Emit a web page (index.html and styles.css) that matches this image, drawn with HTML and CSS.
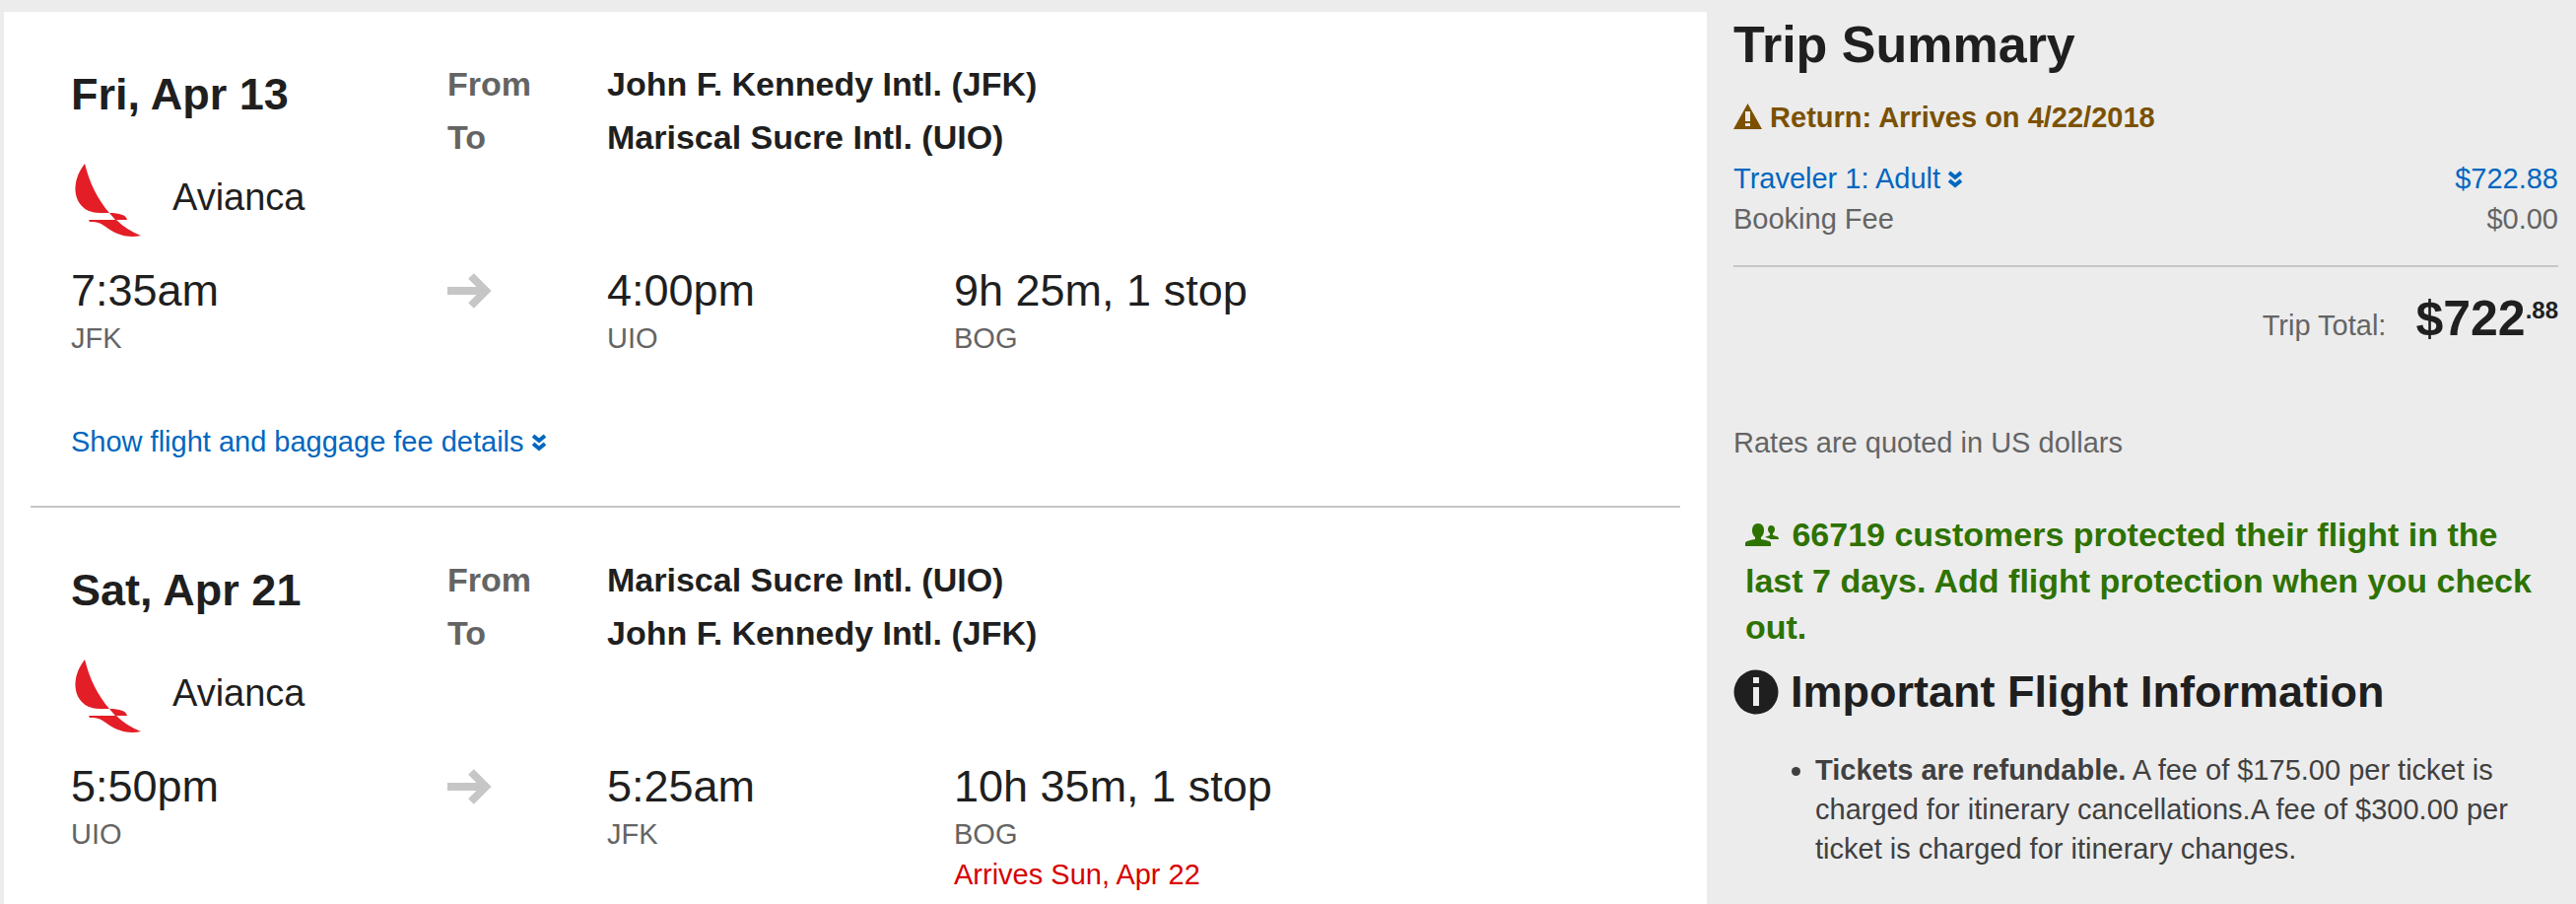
FILE: index.html
```html
<!DOCTYPE html>
<html lang="en">
<head>
    <meta charset="UTF-8">
    <meta name="viewport" content="width=device-width, initial-scale=1.0">
    <title>Trip Summary</title>
    <link rel="stylesheet" href="styles.css">
</head>
<body>
    <!-- Shared icons -->
    <svg class="sprite" aria-hidden="true">
        <symbol id="bird" viewBox="0 0 72 76">
            <path fill="#e31e26" d="M14 0 C3 14 1 32 11 43 Q17 50 29 50 Q34 50 39 50 C27 36 19 20 14 0 Z"/>
            <path fill="#e31e26" d="M39 50 C49 50 56 52 57 57 L45 57 Z"/>
            <path fill="#e31e26" d="M18 57 L46 57 Q56 67 71 73 C60 75 50 74 38 66 C30 60 28 59 19 59 Z"/>
        </symbol>
        <symbol id="arrow" viewBox="0 0 46 38">
            <path fill="none" stroke="#c6c6c6" stroke-width="8" d="M0 19 H40 M24 4 L39 19 L24 34"/>
        </symbol>
        <symbol id="chevrons" viewBox="0 0 14 18">
            <path fill="none" stroke="currentColor" stroke-width="4" d="M1 2 L7 7 L13 2 M1 10 L7 15 L13 10"/>
        </symbol>
    </svg>

    <main class="flights">
        <section class="flight">
            <div class="flight-head">
                <div>
                    <h2 class="date">Fri, Apr 13</h2>
                    <div class="airline">
                        <svg class="airline-logo" aria-hidden="true"><use href="#bird"/></svg>
                        <span>Avianca</span>
                    </div>
                </div>
                <dl class="route">
                    <dt>From</dt>
                    <dd>John F. Kennedy Intl. (JFK)</dd>
                    <dt>To</dt>
                    <dd>Mariscal Sucre Intl. (UIO)</dd>
                </dl>
            </div>
            <div class="times">
                <div>
                    <p class="time">7:35am</p>
                    <p class="place">JFK</p>
                </div>
                <svg class="arrow" aria-hidden="true"><use href="#arrow"/></svg>
                <div>
                    <p class="time">4:00pm</p>
                    <p class="place">UIO</p>
                </div>
                <div>
                    <p class="time">9h 25m, 1 stop</p>
                    <p class="place">BOG</p>
                </div>
            </div>
            <a class="details" href="#">Show flight and baggage fee details <svg class="chevrons" aria-hidden="true"><use href="#chevrons"/></svg></a>
        </section>

        <section class="flight">
            <div class="flight-head">
                <div>
                    <h2 class="date">Sat, Apr 21</h2>
                    <div class="airline">
                        <svg class="airline-logo" aria-hidden="true"><use href="#bird"/></svg>
                        <span>Avianca</span>
                    </div>
                </div>
                <dl class="route">
                    <dt>From</dt>
                    <dd>Mariscal Sucre Intl. (UIO)</dd>
                    <dt>To</dt>
                    <dd>John F. Kennedy Intl. (JFK)</dd>
                </dl>
            </div>
            <div class="times">
                <div>
                    <p class="time">5:50pm</p>
                    <p class="place">UIO</p>
                </div>
                <svg class="arrow" aria-hidden="true"><use href="#arrow"/></svg>
                <div>
                    <p class="time">5:25am</p>
                    <p class="place">JFK</p>
                </div>
                <div>
                    <p class="time">10h 35m, 1 stop</p>
                    <p class="place">BOG</p>
                    <p class="arrives">Arrives Sun, Apr 22</p>
                </div>
            </div>
        </section>
    </main>

    <aside class="summary">
        <h1>Trip Summary</h1>
        <p class="warning">
            <svg class="warning-icon" viewBox="0 0 29 26" aria-hidden="true">
                <path fill="#7b5100" d="M14.500 0 L29 26 H0 Z"/>
                <path fill="#ececec" d="M12 8 H17 V18 H12 Z M12 20 H17 V23 H12 Z"/>
            </svg>
            Return: Arrives on 4/22/2018
        </p>

        <div class="costs">
            <a class="cost" href="#">
                <span>Traveler 1: Adult <svg class="chevrons" aria-hidden="true"><use href="#chevrons"/></svg></span>
                <span>$722.88</span>
            </a>
            <div class="cost">
                <span>Booking Fee</span>
                <span>$0.00</span>
            </div>
        </div>

        <div class="total">
            <span>Trip Total:</span>
            <strong class="amount">$722<sup>.88</sup></strong>
        </div>

        <p class="rates">Rates are quoted in US dollars</p>

        <p class="protect">
            <svg class="people" viewBox="0 0 34 23" aria-hidden="true">
                <path fill="#2e7200" d="M13 0 C17 0 19 3 19 7 C19 10 18 12 16 14 V16 C22 17 26 18 26 20 V23 H0 V20 C0 18 4 17 10 16 V14 C8 12 7 10 7 7 C7 3 9 0 13 0 Z"/>
                <path fill="#2e7200" d="M26 2 C29 2 30 4 30 6 C30 8 29 9 28 10 V12 C32 13 34 13 34 16 H26 C24 15 22 14 20 14 C21 13 23 13 25 12 V10 C24 9 23 8 23 6 C23 4 24 2 26 2 Z"/>
            </svg>
            66719 customers protected their flight in the last 7 days. Add flight protection when you check out.
        </p>

        <h2 class="info-title">
            <svg class="info-icon" viewBox="0 0 46 46" aria-hidden="true">
                <circle cx="23" cy="23" r="22.500" fill="#1f1f1f"/>
                <path fill="#ececec" d="M20 8 H26 V14 H20 Z M20 18 H26 V37 H20 Z"/>
            </svg>
            Important Flight Information
        </h2>
        <ul class="info-list">
            <li><strong>Tickets are refundable.</strong> A fee of $175.00 per ticket is charged for itinerary cancellations.A fee of $300.00 per ticket is charged for itinerary changes.</li>
        </ul>
    </aside>
</body>
</html>
```

FILE: styles.css
```css
* {
    box-sizing: border-box;
}
body {
    margin: 0;
    min-height: 100vh;
    padding: 12px 18px 0 4px;
    display: grid;
    grid-template-columns: 1728fr 837fr;
    column-gap: 27px;
    background-color: #ececec;
    color: #1f1f1f;
    font-family: "Liberation Sans", Arial, sans-serif;
    font-size: 29px;
    line-height: 41px;
}
h1, h2, p, dl, dd, ul {
    margin: 0;
}
a {
    color: #0066bf;
    text-decoration: none;
}
.sprite {
    position: absolute;
    width: 0;
    height: 0;
}
.chevrons {
    width: 14px;
    height: 18px;
}

/* Flights */
.flights {
    background-color: #fff;
    padding: 0 27px;
}
.flight {
    padding: 46px 41px 0;
}
.flight + .flight {
    border-top: 2px solid #c6c6c6;
}
.flight-head {
    display: grid;
    grid-template-columns: 382fr 1210fr;
}
.date {
    margin-top: 10px;
    font-size: 45px;
    line-height: 55px;
}
.airline {
    display: flex;
    gap: 31px;
    margin-top: 43px;
    font-size: 38px;
    line-height: 68px;
}
.airline-logo {
    width: 72px;
    height: 76px;
}
.route {
    display: grid;
    grid-template-columns: 162fr 1048fr;
    align-content: start;
    font-size: 34px;
    font-weight: bold;
    line-height: 54px;
}
.route dt {
    color: #646464;
}
.times {
    display: grid;
    grid-template-columns: 382fr 162fr 352fr 696fr;
    margin-top: 24px;
}
.time {
    font-size: 45px;
    line-height: 57px;
}
.place {
    color: #646464;
}
.arrives {
    color: #d60000;
}
.arrow {
    width: 46px;
    height: 38px;
    margin-top: 10px;
}
.details {
    display: block;
    margin: 64px 0 44px;
}

/* Trip summary */
.summary {
    color: #646464;
    padding-top: 3px;
}
.summary h1 {
    color: #1f1f1f;
    font-size: 52px;
    line-height: 60px;
}
.warning {
    margin-top: 24px;
    color: #7b5100;
    font-weight: bold;
}
.warning-icon {
    width: 29px;
    height: 26px;
    vertical-align: -2px;
}
.costs {
    margin-top: 21px;
    padding-bottom: 26px;
    border-bottom: 2px solid #c6c6c6;
}
.cost {
    display: flex;
    justify-content: space-between;
}
.total {
    display: flex;
    justify-content: flex-end;
    align-items: baseline;
    gap: 30px;
    margin-top: 22px;
}
.amount {
    color: #1f1f1f;
    font-size: 50px;
    line-height: 60px;
}
.amount sup {
    font-size: 24px;
    line-height: 0;
    vertical-align: 17px;
}
.rates {
    margin-top: 76px;
}
.protect {
    margin-top: 49px;
    padding: 0 12px;
    color: #2e7200;
    font-size: 34px;
    font-weight: bold;
    line-height: 47px;
}
.people {
    width: 34px;
    height: 23px;
    margin-right: 4px;
}
.info-title {
    display: flex;
    align-items: center;
    gap: 12px;
    margin-top: 15px;
    color: #1f1f1f;
    font-size: 45px;
    line-height: 54px;
}
.info-icon {
    width: 46px;
    height: 46px;
}
.info-list {
    margin-top: 32px;
    padding-left: 83px;
    color: #404040;
    line-height: 40px;
}
```
